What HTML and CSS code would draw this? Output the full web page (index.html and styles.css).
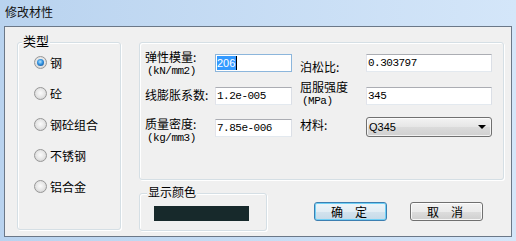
FILE: index.html
```html
<!DOCTYPE html>
<html lang="zh-CN">
<head>
    <meta charset="UTF-8">
    <meta name="viewport" content="width=device-width, initial-scale=1.0">
    <title>修改材性</title>
    <link rel="stylesheet" href="styles.css">
</head>
<body>
    <div class="window">
        <div class="titlebar">修改材性</div>
        <div class="client">
            <div class="group type-group">
                <span class="group-title big">类型</span>
                <div class="radio-row"><span class="radio checked"></span>钢</div>
                <div class="radio-row"><span class="radio"></span>砼</div>
                <div class="radio-row"><span class="radio"></span>钢砼组合</div>
                <div class="radio-row"><span class="radio"></span>不锈钢</div>
                <div class="radio-row"><span class="radio"></span>铝合金</div>
            </div>
            <div class="main">
                <div class="group props">
                    <div class="label">弹性模量:<span class="unit">(kN/mm2)</span></div>
                    <div class="field focused mt4"><span class="sel">206</span><span class="caret"></span></div>
                    <div class="label mt10">泊松比:</div>
                    <div class="field mt4">0.303797</div>

                    <div class="label mt8">线膨胀系数:</div>
                    <div class="field mt7">1.2e-005</div>
                    <div class="label">屈服强度<span class="unit">(MPa)</span></div>
                    <div class="field mt7">345</div>

                    <div class="label mt5">质量密度:<span class="unit">(kg/mm3)</span></div>
                    <div class="field mt7">7.85e-006</div>
                    <div class="label mt6">材料:</div>
                    <div class="combo mt5"><span>Q345</span><span class="arrow"></span></div>
                </div>
                <div class="bottom">
                    <div class="group color-group">
                        <span class="group-title">显示颜色</span>
                        <div class="swatch"></div>
                    </div>
                    <div class="buttons">
                        <button class="btn default">确　定</button>
                        <button class="btn">取　消</button>
                    </div>
                </div>
            </div>
        </div>
    </div>
</body>
</html>
```

FILE: styles.css
```css
body {
    margin: 0;
    width: 516px;
    height: 241px;
    overflow: hidden;
    font-family: "Noto Sans CJK SC", sans-serif;
    font-size: 12px;
    color: #000;
    background: linear-gradient(90deg, #b9d3ef, #d4e6f9);
}
.window {
    height: 241px;
}
.titlebar {
    height: 26px;
    line-height: 24px;
    padding-left: 5px;
    color: #111;
}
.client {
    margin: 0 4px;
    height: 211px;
    box-sizing: border-box;
    border: 1px solid #6b7888;
    background-color: #f0f0f0;
    display: flex;
    align-items: flex-start;
    padding: 15px 0 0 12px;
}
.group {
    position: relative;
    box-sizing: border-box;
    border: 1px solid #d5dfe5;
    border-radius: 3px;
    box-shadow: inset 1px 1px 0 #fff, 1px 1px 0 #fff;
}
.group-title {
    position: absolute;
    top: -9px;
    left: 4px;
    padding: 0 1px;
    line-height: 14px;
    background-color: #f0f0f0;
}
.group-title.big {
    font-size: 13px;
}
.type-group {
    width: 104px;
    height: 188px;
    padding: 4px 0 0 16px;
}
.radio-row {
    height: 31px;
    display: flex;
    align-items: center;
    gap: 3px;
}
.radio {
    width: 13px;
    height: 13px;
    box-sizing: border-box;
    border-radius: 50%;
    border: 1px solid #979797;
    background: radial-gradient(circle at 50% 45%, #fbfbfb 0, #e4e4e4 55%, #c4c4c4 100%);
    position: relative;
}
.radio.checked::after {
    content: "";
    position: absolute;
    left: 2px;
    top: 2px;
    width: 7px;
    height: 7px;
    border-radius: 50%;
    background: radial-gradient(circle at 45% 40%, #b6e4ff 0, #3192e0 45%, #0d3f80 100%);
}
.main {
    margin-left: 18px;
    width: 365px;
}
.props {
    height: 138px;
    padding: 7px 0 0 5px;
    display: grid;
    grid-template-columns: 70px 77px 66px 126px;
    grid-template-rows: 30px 32px 34px;
    align-items: start;
}
.props .label:nth-child(4n+3) {
    margin-left: 8px;
}
.props .field:nth-child(4n),
.props .combo {
    margin-left: 8px;
    width: 126px;
}
.label {
    line-height: 14px;
    white-space: nowrap;
}
.unit {
    display: block;
    padding-left: 2px;
    font-family: "Liberation Mono", monospace;
    font-size: 11px;
    letter-spacing: -0.5px;
}
.field {
    height: 18px;
    width: 77px;
    box-sizing: border-box;
    border: 1px solid;
    border-color: #abadb3 #dbdfe6 #e3e9ef #e2e3ea;
    background-color: #fff;
    padding: 0 1px;
    font-family: "Liberation Mono", monospace;
    font-size: 11px;
    letter-spacing: -0.5px;
    line-height: 16px;
    display: flex;
    align-items: center;
}
.field.focused {
    border-color: #8cb6dc;
}
.sel {
    font-family: "Liberation Sans", sans-serif;
    letter-spacing: 0;
    background-color: #3399ff;
    color: #fff;
    line-height: 14px;
    padding-right: 1px;
}
.caret {
    width: 1px;
    height: 14px;
    background-color: #000;
}
.combo {
    height: 20px;
    box-sizing: border-box;
    border: 1px solid #707070;
    border-radius: 3px;
    background: linear-gradient(#f3f3f3, #e6e6e6 50%, #dbdbdb 51%, #d0d0d0);
    box-shadow: inset 0 0 0 1px rgba(255, 255, 255, 0.7);
    display: flex;
    align-items: center;
    justify-content: space-between;
    padding: 0 5px 0 2px;
    font-family: "Liberation Sans", sans-serif;
    font-size: 11px;
}
.arrow {
    width: 0;
    height: 0;
    border-left: 4px solid transparent;
    border-right: 4px solid transparent;
    border-top: 4px solid #000;
}
.mt4 { margin-top: 4px; }
.mt5 { margin-top: 5px; }
.mt6 { margin-top: 6px; }
.mt7 { margin-top: 7px; }
.mt8 { margin-top: 8px; }
.mt10 { margin-top: 10px; }
.bottom {
    display: flex;
    align-items: flex-start;
    margin-top: 13px;
}
.color-group {
    width: 128px;
    height: 38px;
    padding: 12px 0 0 14px;
}
.color-group .group-title {
    left: 7px;
}
.swatch {
    width: 95px;
    height: 15px;
    background-color: #17292b;
}
.buttons {
    display: flex;
    gap: 23px;
    margin: 9px 0 0 47px;
}
.btn {
    width: 73px;
    height: 19px;
    box-sizing: border-box;
    border: 1px solid #707070;
    border-radius: 3px;
    background: linear-gradient(#f2f2f2, #ebebeb 50%, #dddddd 51%, #cfcfcf);
    box-shadow: inset 0 0 0 1px rgba(255, 255, 255, 0.8);
    font-family: "Noto Sans CJK SC", sans-serif;
    font-size: 12px;
    line-height: 15px;
    padding: 0 3px 0 0;
    color: #000;
}
.btn.default {
    border-color: #3c7fb1;
    background: linear-gradient(#eef5f9, #e2edf4 50%, #d3e3ee 51%, #c6dae8);
    box-shadow: inset 0 0 0 1px #6fd0f6;
}
```
